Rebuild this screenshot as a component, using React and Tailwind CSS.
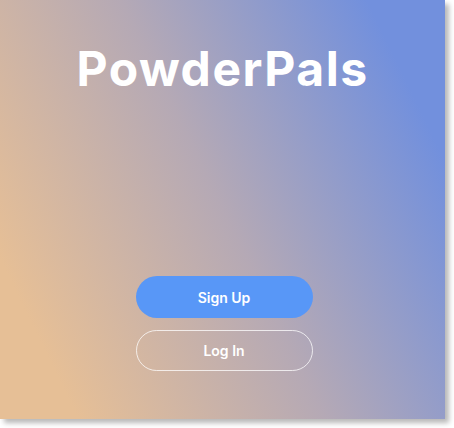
export default function App() {
  return (
    <div className="w-[454px] h-[428px] bg-white">
      <div
        className="w-[445px] h-[419px] flex flex-col items-center shadow-[4px_4px_5px_rgba(0,0,0,0.28)] bg-[linear-gradient(64deg,#e6bf96_12%,#b5a9b5_50%,#7290dd_88%)]"
        style={{ fontFamily: 'Inter, "Open Sans", sans-serif' }}
      >
        <h1 className="mt-[39px] text-[48px] leading-[60px] font-bold text-white tracking-[1.5px]">PowderPals</h1>
        <div className="mt-auto mb-[48px] flex flex-col gap-[12px] ml-[3px]">
          <button className="w-[177px] h-[42px] rounded-full bg-[#5897f7] text-white text-[14px] font-semibold">
            Sign Up
          </button>
          <button className="w-[177px] h-[41px] rounded-full border border-white/75 text-white text-[14px] font-semibold">
            Log In
          </button>
        </div>
      </div>
    </div>
  );
}
